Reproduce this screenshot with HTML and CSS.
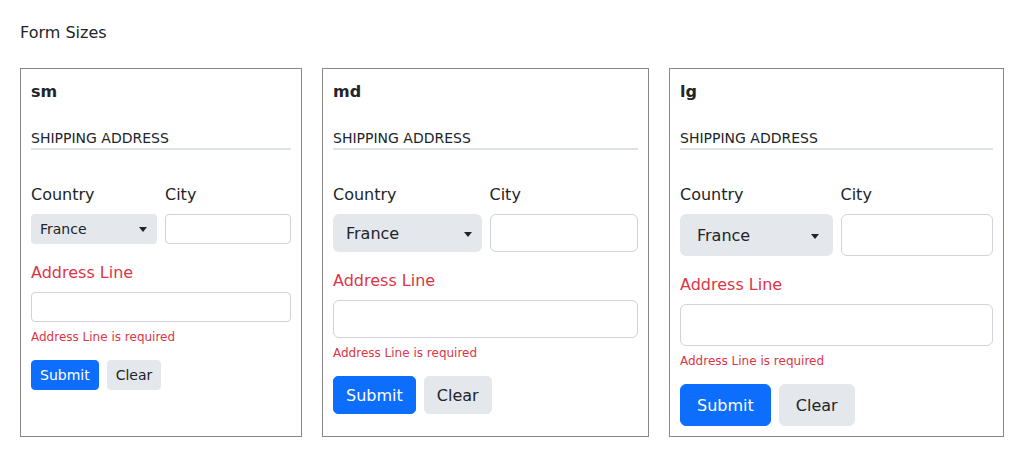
FILE: index.html
```html
<!DOCTYPE html>
<html lang="en">
<head>
<meta charset="utf-8">
<title>Form Sizes</title>
<link rel="stylesheet" href="styles.css">
</head>
<body>
<main class="page">
  <h1 class="page-title">Form Sizes</h1>
  <div class="cards">
    <section class="card size-sm">
      <h2 class="card-title">sm</h2>
      <h3 class="section-heading">SHIPPING ADDRESS</h3>
      <div class="row">
        <div class="field">
          <label class="label">Country</label>
          <div class="select"><span>France</span><svg class="caret" viewBox="0 0 8 5"><path d="M0 0H8L4 5Z"/></svg></div>
        </div>
        <div class="field">
          <label class="label">City</label>
          <input class="input" type="text">
        </div>
      </div>
      <div class="field field-address">
        <label class="label invalid">Address Line</label>
        <input class="input" type="text">
        <div class="feedback">Address Line is required</div>
      </div>
      <div class="actions">
        <button class="btn btn-primary" type="button">Submit</button>
        <button class="btn btn-secondary" type="button">Clear</button>
      </div>
    </section>

    <section class="card size-md">
      <h2 class="card-title">md</h2>
      <h3 class="section-heading">SHIPPING ADDRESS</h3>
      <div class="row">
        <div class="field">
          <label class="label">Country</label>
          <div class="select"><span>France</span><svg class="caret" viewBox="0 0 8 5"><path d="M0 0H8L4 5Z"/></svg></div>
        </div>
        <div class="field">
          <label class="label">City</label>
          <input class="input" type="text">
        </div>
      </div>
      <div class="field field-address">
        <label class="label invalid">Address Line</label>
        <input class="input" type="text">
        <div class="feedback">Address Line is required</div>
      </div>
      <div class="actions">
        <button class="btn btn-primary" type="button">Submit</button>
        <button class="btn btn-secondary" type="button">Clear</button>
      </div>
    </section>

    <section class="card size-lg">
      <h2 class="card-title">lg</h2>
      <h3 class="section-heading">SHIPPING ADDRESS</h3>
      <div class="row">
        <div class="field">
          <label class="label">Country</label>
          <div class="select"><span>France</span><svg class="caret" viewBox="0 0 8 5"><path d="M0 0H8L4 5Z"/></svg></div>
        </div>
        <div class="field">
          <label class="label">City</label>
          <input class="input" type="text">
        </div>
      </div>
      <div class="field field-address">
        <label class="label invalid">Address Line</label>
        <input class="input" type="text">
        <div class="feedback">Address Line is required</div>
      </div>
      <div class="actions">
        <button class="btn btn-primary" type="button">Submit</button>
        <button class="btn btn-secondary" type="button">Clear</button>
      </div>
    </section>
  </div>
</main>
</body>
</html>
```

FILE: styles.css
```css
* {
  box-sizing: border-box;
}

html, body {
  margin: 0;
  background: #ffffff;
}

body {
  padding: 21px 20px 20px;
  font-family: "DejaVu Sans", "Liberation Sans", sans-serif;
  font-size: 16px;
  line-height: 24px;
  color: #212529;
}

.page-title {
  margin: 0 0 23px;
  font-size: 16px;
  font-weight: normal;
  line-height: 24px;
}

.cards {
  display: grid;
  grid-template-columns: 282fr 327fr 335fr;
  gap: 20px;
}

.card {
  border: 1px solid #888888;
  padding: 11px 10px 10px;
}

.card-title {
  margin: 0 0 22px;
  font-size: 16px;
  font-weight: bold;
  line-height: 24px;
}

.section-heading {
  margin: 0;
  font-size: 14px;
  font-weight: normal;
  line-height: 20px;
  padding-top: 2px;
  border-bottom: 2px solid #dee2e6;
}

.row {
  display: grid;
  grid-template-columns: 1fr 1fr;
  gap: 8px;
  margin-top: 33px;
}

.label {
  display: block;
  line-height: 24px;
  margin-bottom: 7px;
}

.label.invalid {
  color: #dc3545;
}

.field-address {
  margin-top: 17px;
}

.select {
  display: flex;
  align-items: center;
  justify-content: space-between;
  background: #e4e7eb;
  color: #212529;
}

.caret {
  width: 8px;
  height: 5px;
  fill: #212529;
  flex: none;
}

.input {
  display: block;
  width: 100%;
  border: 1px solid #ced4da;
  background: #ffffff;
  font-family: inherit;
  margin: 0;
}

.feedback {
  margin-top: 6px;
  font-size: 12px;
  line-height: 18px;
  color: #dc3545;
}

.actions {
  display: flex;
  gap: 8px;
  margin-top: 14px;
}

.btn {
  font-family: inherit;
  border: 1px solid transparent;
  margin: 0;
  cursor: pointer;
}

.btn-primary {
  background: #0d6efd;
  border-color: #0d6efd;
  color: #ffffff;
}

.btn-secondary {
  background: #e4e7eb;
  border-color: #e4e7eb;
  color: #212529;
}

/* sm */
.size-sm .select {
  height: 30px;
  padding: 0 10px 0 9px;
  font-size: 14px;
  border-radius: 4px;
}
.size-sm .input {
  height: 30px;
  border-radius: 4px;
  font-size: 14px;
}
.size-sm .btn {
  font-size: 14px;
  line-height: 20px;
  padding: 4px 8px;
  border-radius: 4px;
}

/* md */
.size-md .select {
  height: 38px;
  padding: 2px 10px 0 13px;
  font-size: 16px;
  border-radius: 6px;
}
.size-md .input {
  height: 38px;
  border-radius: 6px;
  font-size: 16px;
}
.size-md .btn {
  font-size: 16px;
  line-height: 24px;
  padding: 7px 12px 5px;
  border-radius: 5px;
}

/* lg */
.size-lg .select {
  height: 42px;
  padding: 2px 14px 0 17px;
  font-size: 16px;
  border-radius: 6px;
}
.size-lg .input {
  height: 42px;
  border-radius: 6px;
  font-size: 16px;
}
.size-lg .btn {
  font-size: 16px;
  line-height: 24px;
  padding: 9px 16px 7px;
  border-radius: 6px;
}
```
